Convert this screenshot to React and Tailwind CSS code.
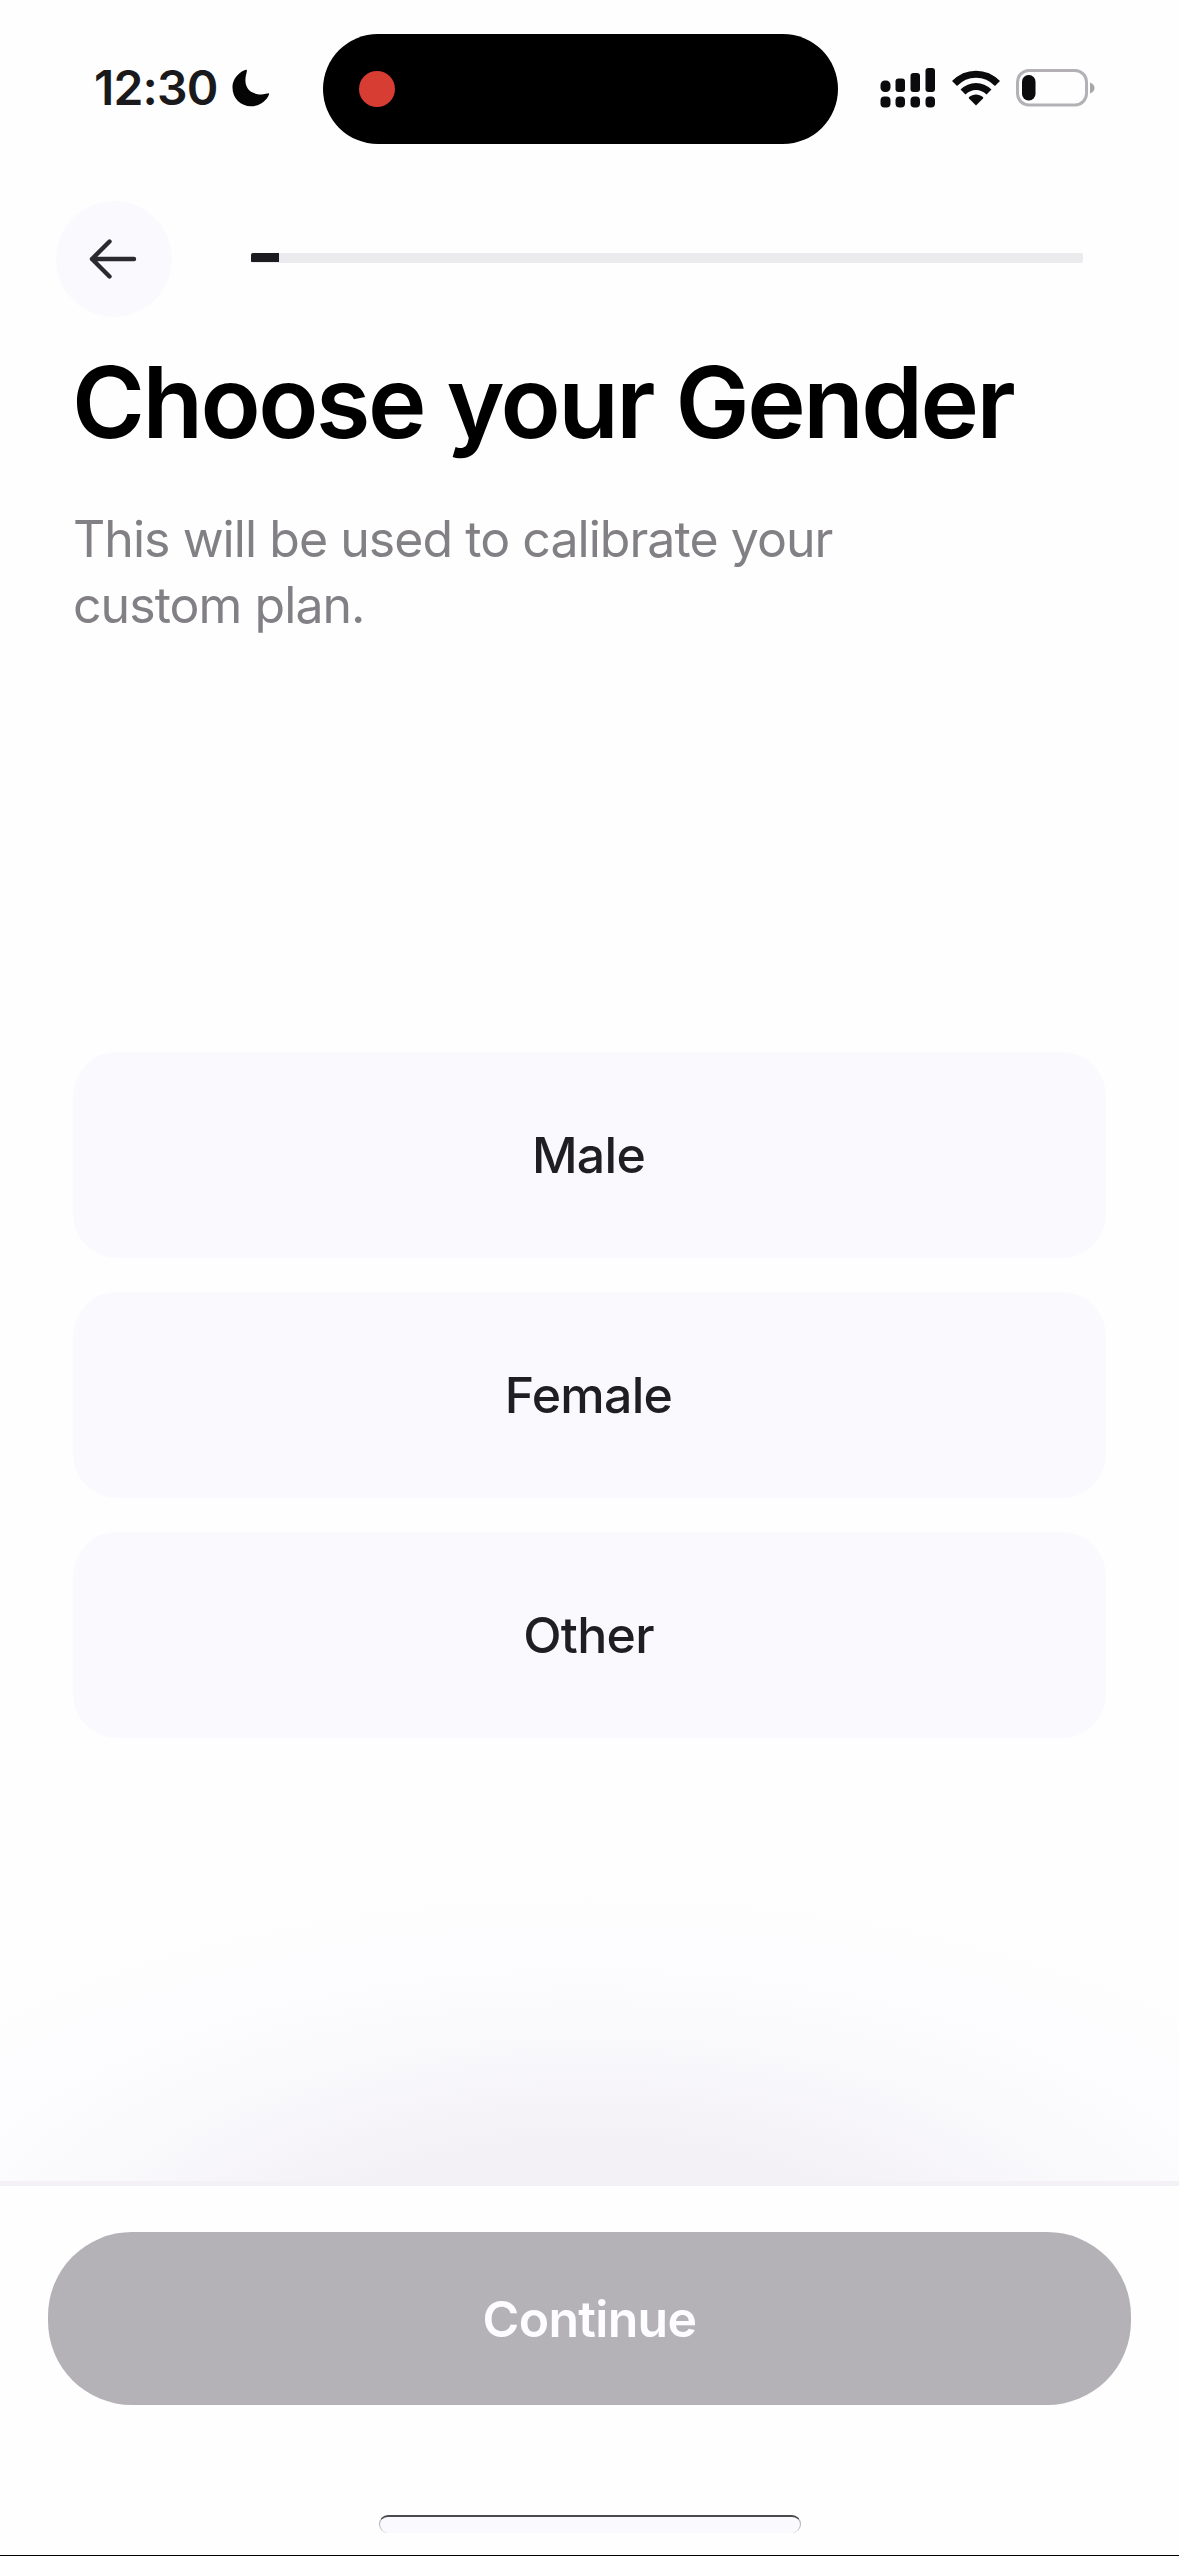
const GENDERS = ["Male", "Female", "Other"];

function SignalIcon() {
  return (
    <svg width="56" height="40" viewBox="0 0 56 40" fill="#0b0b0d">
      <rect x="0.5" y="12.500" width="10" height="11.500" rx="4.5" />
      <rect x="15.5" y="10.500" width="9.500" height="13.500" rx="3" />
      <rect x="30.5" y="5" width="9.500" height="19" rx="3" />
      <rect x="45.5" y="0" width="9.500" height="24" rx="3" />
      <rect x="0.5" y="28.500" width="10" height="11" rx="4" />
      <rect x="15.5" y="28.500" width="9.500" height="11" rx="4" />
      <rect x="30.5" y="28.500" width="9.500" height="11" rx="4" />
      <rect x="45.5" y="28.500" width="9.500" height="11" rx="4" />
    </svg>
  );
}

function WifiIcon() {
  return (
    <svg width="48" height="36" viewBox="0 0 48 36" fill="none" stroke="#0b0b0d" strokeWidth="7">
      <path d="M2.5 13.5C14.5 1 33.5 1 45.5 13.5" />
      <path d="M11 22C18.5 14.5 29.5 14.5 37 22" />
      <path d="M24 35.5L17 28.6C16.6 28.1 16.7 27.5 17.1 27.1C21 23.7 27 23.7 30.9 27.1C31.3 27.5 31.4 28.1 31 28.6Z" fill="#0b0b0d" stroke="none" />
    </svg>
  );
}

function BatteryIcon() {
  return (
    <svg width="80" height="38" viewBox="0 0 80 38">
      <rect x="1.5" y="1.5" width="69" height="34.5" rx="11.5" fill="none" stroke="#b3b1b5" strokeWidth="3" />
      <rect x="6" y="6" width="13.5" height="25.5" rx="6.5" fill="#0b0b0d" />
      <path d="M74 13.5C77 14.5 78.5 16.5 78.5 19S77 23.500 74 24.500Z" fill="#a8a6aa" />
    </svg>
  );
}

function StatusBar() {
  return (
    <div className="flex h-[178px] items-start pt-[34px]">
      <div className="flex h-[110px] w-[322.5px] items-center pl-[94px]">
        <span className="mb-[3px] w-[138px] text-[48px] leading-none font-semibold tracking-[-0.8px] text-[#1a191c]">12:30</span>
        <svg width="38" height="38" viewBox="0 0 38 38" className="mb-[2px] shrink-0">
          <path d="M14.500 0.800C13.700 0.300 0.500 5.500 0.500 18.800C0.500 29.500 8.800 37.300 19 37.300C32.500 37.300 38 25.200 37 24.400C36.300 23.700 32.500 26 27 25.400C14.500 24 12 14.500 14 6C14.700 3 15.300 1.300 14.500 0.800Z" fill="#050506" />
        </svg>
      </div>
      <div className="flex h-[110px] w-[515px] items-center rounded-full bg-black pl-[36px]">
        <div className="size-[36px] rounded-full bg-[#d73d32]" />
      </div>
      <div className="flex h-[107px] items-center pl-[42.500px]">
        <SignalIcon />
        <div className="w-[15.500px]" />
        <WifiIcon />
        <div className="w-[16px]" />
        <BatteryIcon />
      </div>
    </div>
  );
}

export default function App() {
  return (
    <div className="flex h-[2556px] w-[1179px] flex-col overflow-hidden border-b border-black bg-[#fefefe] bg-[radial-gradient(ellipse_860px_420px_at_590px_2300px,#f2f0f4_0%,#f3f1f5_38%,#f9f8fb_62%,#fcfbfe_78%,#fefefe_98%)] font-['Inter',sans-serif]">
      <StatusBar />

      <header className="flex h-[162px] items-center pl-[55.500px]">
        <button className="flex size-[116px] items-center justify-center rounded-full bg-[#faf9fe]">
          <svg width="48" height="40" viewBox="0 0 48 40" fill="none" stroke="#2b2a2e" strokeWidth="4.400" strokeLinecap="round" strokeLinejoin="round" className="mr-[2px]">
            <path d="M20.500 2.500L3 20L20.500 37.500M3 20H45" />
          </svg>
        </button>
        <div className="mb-[2px] ml-[79px] h-[10px] w-[832px] overflow-hidden rounded-[2px] bg-[#ebeaec]">
          <div className="h-[9px] w-[28px] bg-[#1c1b1f]" />
        </div>
      </header>

      <section className="px-[72px] pt-[2px]">
        <h1 className="text-[99px] leading-[120px] font-semibold tracking-[-2.5px] whitespace-nowrap text-black">Choose your Gender</h1>
        <p className="mt-[44px] pl-px text-[50px] leading-[66px] tracking-[-0.950px] text-[#828085]">
          This will be used to calibrate your
          <br />
          custom plan.
        </p>
      </section>

      <section className="mt-[414px] flex flex-col gap-[34px] px-[73px]">
        {GENDERS.map((gender) => (
          <button key={gender} className="h-[206px] rounded-[44px] bg-[#faf9fe] pt-[1px] pr-[2px] text-[50px] font-medium tracking-[-0.700px] text-[#1f1e22]">
            {gender}
          </button>
        ))}
      </section>

      <footer className="mt-auto flex h-[374px] shrink-0 flex-col items-center border-t-[5px] border-[#f3f1f5] bg-[#fefefe] pt-[46px]">
        <button className="h-[173px] w-[1083px] rounded-[84px] bg-[#b4b2b7] pt-[2px] text-[50px] font-semibold tracking-[-0.700px] text-[#fdfcff]">Continue</button>
        <div className="mt-[110px] h-[18px] w-[422px] rounded-[9px] border-t-2 border-r border-l border-t-[#4b4a4e] border-r-[#b5b4b8] border-l-[#b5b4b8] bg-[#faf9fd]" />
      </footer>
    </div>
  );
}
